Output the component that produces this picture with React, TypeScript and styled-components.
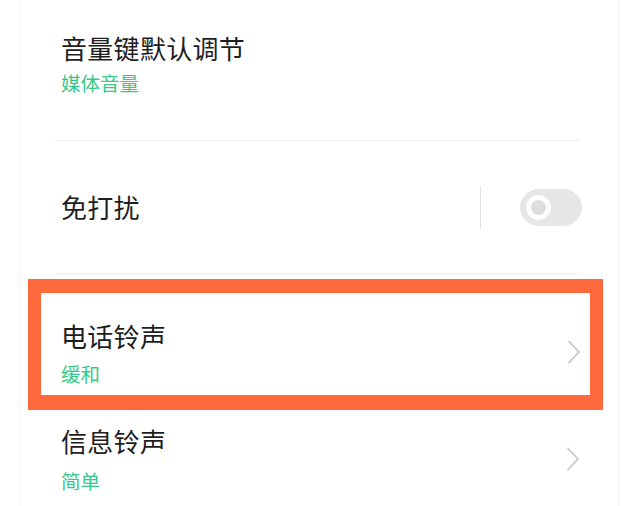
import React from "react";
import styled, { createGlobalStyle } from "styled-components";

const Global = createGlobalStyle`
  html, body { margin: 0; padding: 0; background: #ffffff; }
  body { font-family: "Noto Sans CJK SC", "Noto Sans", sans-serif; }
`;

const Page = styled.div`
  width: 635px;
  height: 506px;
  overflow: hidden;
  display: flex;
  padding-left: 20px;
  box-sizing: border-box;
`;

const Panel = styled.div`
  width: 599px;
  display: flex;
  flex-direction: column;
  background: #ffffff;
  border-left: 1px solid #f4f4f4;
  border-right: 1px solid #f4f4f4;
  box-sizing: border-box;
`;

const Row = styled.div<{ $h: number; $top?: number; $center?: boolean }>`
  height: ${(p) => p.$h}px;
  box-sizing: border-box;
  display: flex;
  align-items: ${(p) => (p.$center ? "center" : "flex-start")};
  justify-content: space-between;
  padding: ${(p) => p.$top ?? 0}px 38px 0 40px;
`;

const TextCol = styled.div<{ $gap: number }>`
  display: flex;
  flex-direction: column;
  gap: ${(p) => p.$gap}px;
`;

const Title = styled.div`
  font-size: 26px;
  line-height: 26px;
  color: #1e1e1e;
  letter-spacing: 0.3px;
`;

const Sub = styled.div`
  font-size: 19.5px;
  line-height: 20px;
  color: #38c98a;
`;

const Divider = styled.div`
  height: 1px;
  background: #efefef;
  margin: 0 38px 0 34px;
`;

const RightGroup = styled.div`
  display: flex;
  align-items: center;
  gap: 39px;
`;

const VLine = styled.div`
  width: 1px;
  height: 42px;
  background: #e2e2e2;
`;

const Toggle = styled.div`
  width: 62px;
  height: 37px;
  border-radius: 19px;
  background: #e6e6e6;
  display: flex;
  align-items: center;
  padding-left: 6px;
  box-sizing: border-box;
  margin-right: -2px;
`;

const Knob = styled.div`
  width: 25px;
  height: 25px;
  border-radius: 50%;
  border: 5px solid #ffffff;
  background: #dedede;
  box-sizing: border-box;
`;

const Frame = styled.div`
  margin: 5px 15px 0 7px;
  border: 13px solid #ff6a3d;
  border-top-width: 14px;
  border-bottom-width: 15px;
`;

const FrameInner = styled(Row)`
  padding: 30px 9px 0 20px;
`;

const ChevronWrap = styled.div<{ $dy: number }>`
  display: flex;
  margin-top: ${(p) => p.$dy}px;
`;

const Chevron = ({ dy }: { dy: number }) => (
  <ChevronWrap $dy={dy}>
    <svg width="14" height="24" viewBox="0 0 14 24">
      <polyline
        points="2,1.5 12,12 2,22.5"
        fill="none"
        stroke="#c6c6c6"
        strokeWidth="1.8"
        strokeLinecap="round"
        strokeLinejoin="round"
      />
    </svg>
  </ChevronWrap>
);

export default function App() {
  return (
    <>
      <Global />
      <Page>
        <Panel>
          <Row $h={140} $top={35}>
            <TextCol $gap={12}>
              <Title>音量键默认调节</Title>
              <Sub>媒体音量</Sub>
            </TextCol>
          </Row>
          <Divider />
          <Row $h={132} $center>
            <Title>免打扰</Title>
            <RightGroup>
              <VLine />
              <Toggle>
                <Knob />
              </Toggle>
            </RightGroup>
          </Row>
          <Divider />
          <Frame>
            <FrameInner $h={102} $top={30}>
              <TextCol $gap={15}>
                <Title>电话铃声</Title>
                <Sub>缓和</Sub>
              </TextCol>
              <Chevron dy={17} />
            </FrameInner>
          </Frame>
          <Row $h={96} $top={18}>
            <TextCol $gap={17}>
              <Title>信息铃声</Title>
              <Sub>简单</Sub>
            </TextCol>
            <Chevron dy={19} />
          </Row>
        </Panel>
      </Page>
    </>
  );
}
